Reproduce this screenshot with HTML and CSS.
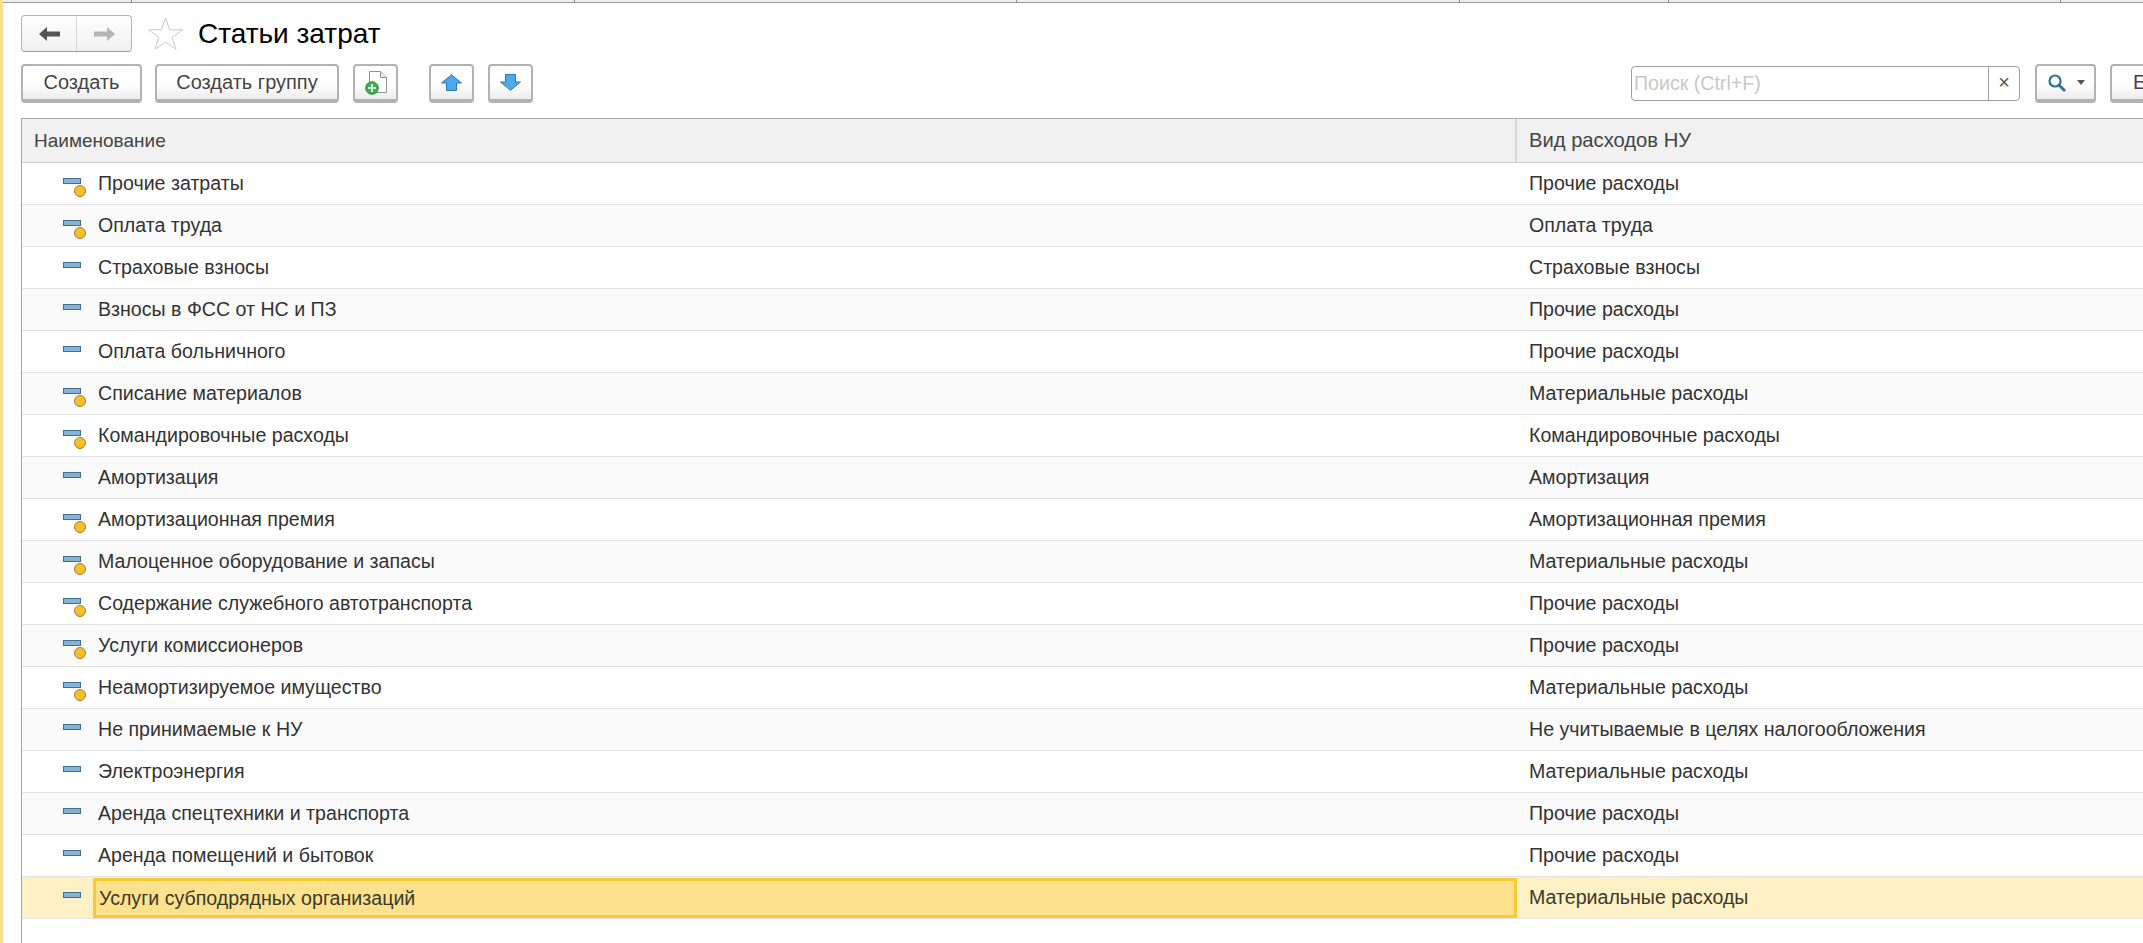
FILE: index.html
```html
<!DOCTYPE html>
<html lang="ru">
<head>
<meta charset="utf-8">
<title>Статьи затрат</title>
<link rel="stylesheet" href="styles.css">
</head>
<body>
<div class="top-line"><i class="t1"></i><i class="t2"></i><i class="t3"></i><i class="t4"></i><i class="t5"></i><i class="t6"></i></div>
<main class="page">
  <div class="title-row">
    <div class="nav">
      <span class="nav-cell"><svg width="21" height="14" viewBox="0 0 21 14"><path d="M0 7 8 0v4.500h13v5H8V14z" fill="#555"/></svg></span>
      <span class="nav-cell"><svg width="21" height="14" viewBox="0 0 21 14"><path d="M21 7 13 0v4.500H0v5h13V14z" fill="#b5b5b5"/></svg></span>
    </div>
    <svg class="star" width="35" height="33" viewBox="0 0 35 33"><path d="M17.500 1l4.200 11.800h12.800l-10.300 7.600 3.800 11.800-10.500-7.200-10.500 7.200 3.800-11.800L.5 12.800h12.800z" fill="#fff" stroke="#c9c9c9"/></svg>
    <h1>Статьи затрат</h1>
  </div>
  <div class="toolbar">
    <button class="btn b-create">Создать</button>
    <button class="btn b-group">Создать группу</button>
    <button class="btn b-icon"><svg width="22" height="24" viewBox="0 0 22 24"><path d="M4.500.5h11l6 6v15h-17z" fill="#fff" stroke="#8a949c"/><path d="M15.500.5v6h6" fill="#eee" stroke="#8a949c"/><circle cx="7" cy="17" r="6.300" fill="#3fae4c" stroke="#2b8f3a"/><path d="M7 13v8M3 17h8" stroke="#fff" stroke-width="1.600"/></svg></button>
    <button class="btn b-icon b-up"><svg width="21" height="17" viewBox="0 0 21 17"><path d="M10.500 .8 20.500 9H15.500V16.500H5.500V9H.5z" fill="#4da8ec" stroke="#2b78b4"/></svg></button>
    <button class="btn b-icon b-down"><svg width="21" height="17" viewBox="0 0 21 17"><path d="M10.500 16.200 .5 8H5.500V.5h10V8h5z" fill="#4da8ec" stroke="#2b78b4"/></svg></button>
    <div class="search">
      <span class="search-input">Поиск (Ctrl+F)</span>
      <span class="search-clear">×</span>
    </div>
    <button class="btn b-find"><svg width="20" height="20" viewBox="0 0 20 20"><circle cx="8" cy="8" r="5.500" fill="none" stroke="#2f7197" stroke-width="2.200"/><path d="M12 12l6 6" stroke="#2f7197" stroke-width="2.800"/></svg><i class="caret"></i></button>
    <button class="btn b-more">Е</button>
  </div>
  <div class="table">
    <div class="row head"><div class="c1">Наименование</div><div class="c2">Вид расходов НУ</div></div>
    <div class="row"><div class="c1"><i class="ico dot"></i>Прочие затраты</div><div class="c2">Прочие расходы</div></div>
    <div class="row alt"><div class="c1"><i class="ico dot"></i>Оплата труда</div><div class="c2">Оплата труда</div></div>
    <div class="row"><div class="c1"><i class="ico"></i>Страховые взносы</div><div class="c2">Страховые взносы</div></div>
    <div class="row alt"><div class="c1"><i class="ico"></i>Взносы в ФСС от НС и ПЗ</div><div class="c2">Прочие расходы</div></div>
    <div class="row"><div class="c1"><i class="ico"></i>Оплата больничного</div><div class="c2">Прочие расходы</div></div>
    <div class="row alt"><div class="c1"><i class="ico dot"></i>Списание материалов</div><div class="c2">Материальные расходы</div></div>
    <div class="row"><div class="c1"><i class="ico dot"></i>Командировочные расходы</div><div class="c2">Командировочные расходы</div></div>
    <div class="row alt"><div class="c1"><i class="ico"></i>Амортизация</div><div class="c2">Амортизация</div></div>
    <div class="row"><div class="c1"><i class="ico dot"></i>Амортизационная премия</div><div class="c2">Амортизационная премия</div></div>
    <div class="row alt"><div class="c1"><i class="ico dot"></i>Малоценное оборудование и запасы</div><div class="c2">Материальные расходы</div></div>
    <div class="row"><div class="c1"><i class="ico dot"></i>Содержание служебного автотранспорта</div><div class="c2">Прочие расходы</div></div>
    <div class="row alt"><div class="c1"><i class="ico dot"></i>Услуги комиссионеров</div><div class="c2">Прочие расходы</div></div>
    <div class="row"><div class="c1"><i class="ico dot"></i>Неамортизируемое имущество</div><div class="c2">Материальные расходы</div></div>
    <div class="row alt"><div class="c1"><i class="ico"></i>Не принимаемые к НУ</div><div class="c2">Не учитываемые в целях налогообложения</div></div>
    <div class="row"><div class="c1"><i class="ico"></i>Электроэнергия</div><div class="c2">Материальные расходы</div></div>
    <div class="row alt"><div class="c1"><i class="ico"></i>Аренда спецтехники и транспорта</div><div class="c2">Прочие расходы</div></div>
    <div class="row"><div class="c1"><i class="ico"></i>Аренда помещений и бытовок</div><div class="c2">Прочие расходы</div></div>
    <div class="row sel"><div class="c1"><i class="ico"></i><span class="focus">Услуги субподрядных организаций</span></div><div class="c2">Материальные расходы</div></div>
  </div>
</main>
</body>
</html>
```
FILE: styles.css
```css
* { box-sizing: border-box; }
html, body { margin: 0; height: 100%; overflow: hidden; }
body {
  width: 2143px; height: 943px; background: #fff; color: #333;
  font-family: "Liberation Sans", Arial, sans-serif; font-size: 19.6px;
  border-left: 3px solid #f5e08c; position: relative;
}
.top-line { height: 3px; width: 2143px; background: #eee; border-bottom: 1px solid #9a9a9a; margin-left: -3px; position: relative; }
.top-line i { position: absolute; top: 0; width: 1px; height: 3px; background: #8e8e8e; }
.t1 { left: 131px; } .t2 { left: 574px; } .t3 { left: 1016px; } .t4 { left: 1459px; } .t5 { left: 1668px; } .t6 { left: 2060px; }
.page { padding: 12px 0 0 18px; }
.title-row { display: flex; align-items: center; height: 37px; }
.nav { display: flex; width: 111px; height: 37px; border: 1px solid #b5b5b5; border-bottom-color: #9c9c9c; border-radius: 4px; background: linear-gradient(#fff, #f0f0f0); }
.nav-cell { flex: 1; display: flex; align-items: center; justify-content: center; }
.nav-cell + .nav-cell { border-left: 1px solid #d8d8d8; }
.star { margin-left: 16px; }
h1 { margin: 0 0 0 15px; font-size: 28px; font-weight: 400; color: #000; }
.toolbar { display: flex; align-items: flex-start; margin-top: 12px; height: 39px; }
.btn {
  flex: none; height: 39px; padding: 0; margin: 0; font: 20px "Liberation Sans", Arial, sans-serif; color: #444;
  background: linear-gradient(#fff 55%, #ececec); border: 2px solid #b2b2b2; border-bottom-width: 4px; border-radius: 4px;
  display: flex; align-items: center; justify-content: center;
}
.b-create { width: 121px; }
.b-group { width: 184px; margin-left: 13px; }
.b-icon { width: 45px; margin-left: 14px; }
.b-up { margin-left: 31px; }
.b-down { margin-left: 14px; }
.search { flex: none; display: flex; width: 389px; height: 35px; margin: 2px 0 0 1098px; border: 1px solid #a0a0a0; border-radius: 4px; }
.search-input { flex: 1; padding-left: 2px; line-height: 33px; color: #c8c8c8; font-size: 19.6px; border-right: 1px solid #a0a0a0; }
.search-clear { width: 30px; text-align: center; line-height: 31px; font-size: 20px; color: #555; }
.b-find { width: 61px; margin-left: 15px; gap: 10px; }
.caret { width: 0; height: 0; border: 4px solid transparent; border-top: 5px solid #555; border-bottom: 0; }
.b-more { width: 60px; margin-left: 14px; justify-content: flex-start; padding-left: 21px; }
.table { width: 2122px; margin-top: 15px; height: 825px; border-left: 1px solid #a8a8a8; border-top: 1px solid #a8a8a8; }
.row { display: flex; height: 42px; border-bottom: 1px solid #e3e3e3; align-items: stretch; color: #333; }
.row > div { display: flex; align-items: center; }
.c1 { width: 1495px; padding-left: 12px; position: relative; }
.c2 { flex: 1; padding-left: 12px; }
.alt { background: #fafafa; }
.head { height: 44px; background: #f1f1f1; border-bottom-color: #cfcfcf; color: #444; }
.head .c1 { border-right: 2px solid #d8d8d8; font-size: 19px; }
.head .c2 { font-size: 20.2px; }
.ico { display: block; width: 18px; height: 6px; margin: -5px 17px 0 29px; background: #87b2d6; border: 1px solid #3f6f92; position: relative; flex: none; }
.dot::after { content: ""; position: absolute; left: 10px; top: 6px; width: 10px; height: 10px; border-radius: 50%; background: #f5bf2c; border: 1px solid #9c8436; }
.sel { background: #fdf1c5; color: #3a3a2a; }
.focus { align-self: stretch; flex: 1; margin: 1px 0 0 -5px; padding: 0 0 0 3px; display: flex; align-items: center; background: #fde18c; border: 3px solid #f7cb36; }
```
